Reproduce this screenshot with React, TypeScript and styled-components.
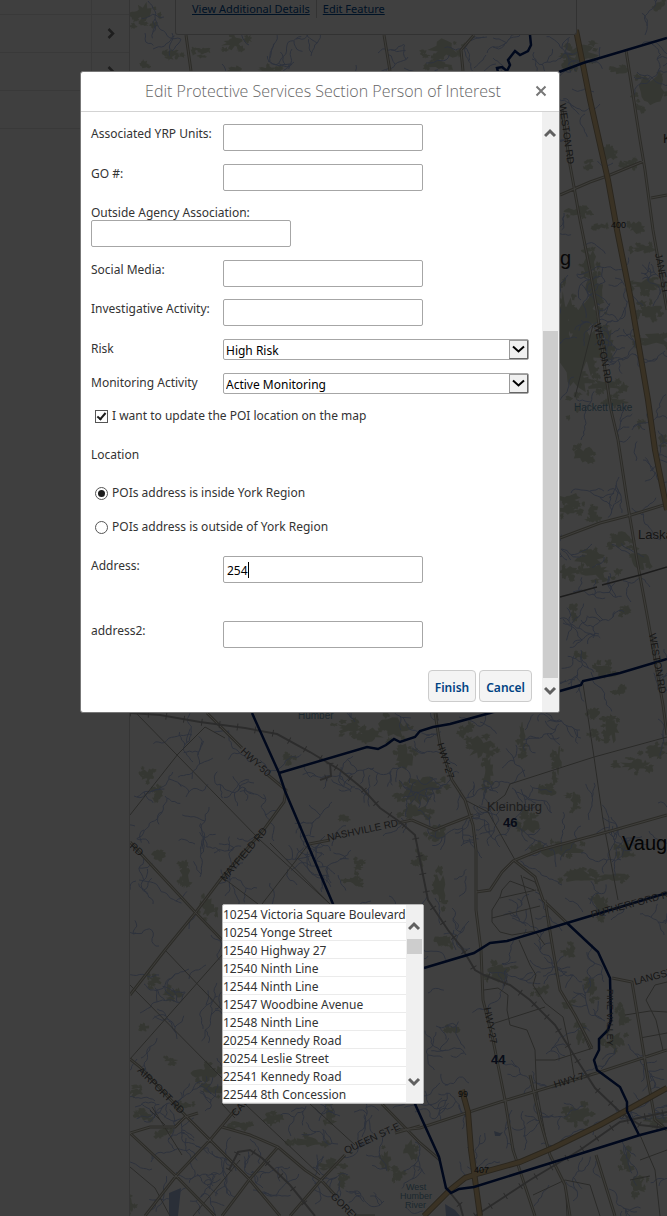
import React from "react";
import styled, { createGlobalStyle } from "styled-components";

const GlobalStyle = createGlobalStyle`
  *, *::before, *::after { box-sizing: border-box; }
  body {
    margin: 0;
    background: #ffffff;
    color: #333333;
    font-family: "Noto Sans", "Open Sans", sans-serif;
    font-size: 12px;
    line-height: 18px;
  }
`;

/* ---------- page behind the dialog ---------- */

const Page = styled.div`
  position: relative;
  display: flex;
  min-height: 100vh;
  overflow: hidden;
`;

const Sidebar = styled.nav`
  flex: 0 0 130px;
  background: #fafafa;
  border-right: 1px solid #d4d4d4;
`;

const SideRow = styled.div<{ $first?: boolean }>`
  display: grid;
  grid-template-columns: 91px 1fr;
  height: ${(p) => (p.$first ? 15 : 38)}px;
  border-bottom: 1px solid #e4e4e4;
`;

const SideToggle = styled.button`
  display: flex;
  align-items: center;
  justify-content: center;
  padding: 0;
  border: 0;
  border-left: 1px solid #e4e4e4;
  background: none;
  color: #777777;
`;

const SideEdge = styled.span`
  grid-column: 2;
  border-left: 1px solid #e4e4e4;
`;

const MapArea = styled.main`
  position: relative;
  flex: 1;
  min-width: 0;
  background: #ffffff;
`;

const MapDrawing = styled.svg`
  position: absolute;
  inset: 0;
  width: 100%;
  height: 100%;
`;

const Popup = styled.section`
  position: relative;
  display: flex;
  align-items: center;
  width: 402px;
  height: 35px;
  margin-left: 45px;
  padding: 0 16px 17px;
  border: 1px solid #c8c8c8;
  border-top: 0;
  border-radius: 0 0 3px 3px;
  background: #ffffff;
`;

const PopupLink = styled.a`
  color: #004b96;
  font-size: 11px;
  text-decoration: underline;
  white-space: nowrap;

  & + & {
    margin-left: 6px;
    padding-left: 6px;
    border-left: 1px solid #cccccc;
  }
`;

const Scrim = styled.div`
  position: absolute;
  inset: 0;
  background: rgba(0, 0, 0, 0.75);
`;

/* ---------- dialog ---------- */

const DialogLayer = styled.div`
  position: absolute;
  inset: 0;
  padding: 71px 107px 0 80px;
`;

const Dialog = styled.div`
  width: 100%;
  max-width: 480px;
  border: 1px solid #777777;
  border-radius: 3px;
  background: #ffffff;
  overflow: hidden;
`;

const DialogHeader = styled.header`
  display: flex;
  align-items: center;
  height: 40px;
  padding: 0 10px 2px 32px;
  border-bottom: 1px solid #d3d3d3;
`;

const DialogTitle = styled.h1`
  flex: 1;
  margin: 0;
  color: #666666;
  font-family: "Open Sans", "Noto Sans", sans-serif;
  font-size: 16px;
  font-weight: 300;
  line-height: 24px;
  text-align: center;
  white-space: nowrap;
`;

const CloseButton = styled.button`
  display: flex;
  padding: 2px;
  border: 0;
  background: none;
  color: #777777;
`;

const DialogBody = styled.div`
  display: flex;
`;

const Form = styled.form`
  flex: 1;
  min-width: 0;
  padding: 12px 10px 10px;
`;

const Field = styled.div<{ $stacked?: boolean; $gap?: number }>`
  display: grid;
  grid-template-columns: ${(p) => (p.$stacked ? "1fr" : "132px 1fr")};
  grid-template-rows: ${(p) => (p.$stacked ? "16px auto" : "auto")};
  align-items: start;
  margin-bottom: ${(p) => p.$gap ?? 13}px;
  line-height: ${(p) => (p.$stacked ? 18 : 20)}px;
`;

const TextInput = styled.input`
  width: 200px;
  height: 27px;
  padding: 2px 3px 0;
  border: 1px solid #a6a6a6;
  border-radius: 2px;
  background: #ffffff;
  color: #000000;
  font: inherit;
  outline: none;
`;

const CaretBox = styled.div`
  position: relative;
`;

const Caret = styled.span`
  position: absolute;
  top: 6px;
  left: 25px;
  width: 1px;
  height: 16px;
  background: #000000;
`;

const SelectBox = styled.div`
  position: relative;
  margin-right: 3px;
`;

const Select = styled.select`
  display: block;
  width: 100%;
  height: 21px;
  padding: 2px 22px 0 2px;
  border: 1px solid #a6a6a6;
  border-radius: 2px;
  background: #ffffff;
  color: #000000;
  font: inherit;
  line-height: 18px;
  appearance: none;
`;

const SelectArrow = styled.span`
  position: absolute;
  top: 1px;
  right: 1px;
  display: flex;
  align-items: center;
  justify-content: center;
  width: 19px;
  height: 19px;
  border: 1px solid #999999;
  border-right-color: #666666;
  border-bottom-color: #666666;
  background: #f0f0f0;
  pointer-events: none;
`;

const Choice = styled.label<{ $gap: number }>`
  display: flex;
  align-items: center;
  gap: 4px;
  margin-bottom: ${(p) => p.$gap}px;
  padding-left: 4px;
`;

const Tick = styled.input`
  position: relative;
  width: 13px;
  height: 13px;
  margin: 0;
  border: 1px solid #555555;
  border-radius: ${(p) => (p.type === "radio" ? "50%" : "0")};
  background: #ffffff;
  appearance: none;

  &[type="radio"]:checked::after {
    content: "";
    position: absolute;
    inset: 2px;
    border-radius: 50%;
    background: #1c1c1c;
  }

  &[type="checkbox"]:checked::after {
    content: "";
    position: absolute;
    top: 0;
    left: 3px;
    width: 5px;
    height: 9px;
    border: solid #1c1c1c;
    border-width: 0 2px 2px 0;
    transform: rotate(40deg);
  }
`;

const Choices = styled.fieldset`
  margin: 0;
  padding: 0;
  border: 0;
`;

const Legend = styled.legend`
  margin-bottom: 20px;
  padding: 0;
`;

const Actions = styled.div`
  display: flex;
  justify-content: flex-end;
  gap: 3px;
  margin-top: 22px;
`;

const ActionButton = styled.button`
  height: 32px;
  padding: 3px 6px 0;
  border: 1px solid #cccccc;
  border-radius: 4px;
  background: #f4f4f4;
  color: #004282;
  font: inherit;
  font-weight: 600;
`;

/* ---------- scroll bars ---------- */

const Bar = styled.div`
  display: flex;
  flex: 0 0 17px;
  flex-direction: column;
  align-items: center;
  background: #f0f0f0;
  color: #606060;
`;

const BarEnd = styled.div<{ $down?: boolean }>`
  display: flex;
  flex: 0 0 34px;
  align-items: ${(p) => (p.$down ? "flex-start" : "flex-end")};
  padding: 8px 0;
`;

const BarSpace = styled.div<{ $grow: number }>`
  flex: ${(p) => p.$grow} 0 0;
`;

const BarThumb = styled.div<{ $grow: number }>`
  flex: ${(p) => p.$grow} 0 0;
  width: 15px;
  background: #cdcdcd;
`;

/* ---------- address suggestions ---------- */

const Suggestions = styled.div`
  position: absolute;
  top: 904px;
  left: 222px;
  display: flex;
  width: 202px;
  border: 1px solid #b5b5b5;
  border-radius: 2px;
  background: #ffffff;
  overflow: hidden;
`;

const SuggestionList = styled.ul`
  flex: 1;
  min-width: 0;
  margin: 0;
  padding: 0;
  list-style: none;
`;

const Suggestion = styled.li`
  height: 18px;
  border-bottom: 1px solid #ebebeb;
  line-height: 20px;
  white-space: nowrap;
`;

const Chevron = ({ down }: { down?: boolean }) => (
  <svg width="13" height="10" viewBox="0 0 13 10" fill="none" stroke="currentColor" strokeWidth="3" aria-hidden="true">
    <path d={down ? "M1 2l5 5 5-5" : "M1 8l5-5 5 5"} />
  </svg>
);

const ScrollBar = ({ before, thumb, after }: { before: number; thumb: number; after: number }) => (
  <Bar aria-hidden="true">
    <BarEnd><Chevron /></BarEnd>
    <BarSpace $grow={before} />
    <BarThumb $grow={thumb} />
    <BarSpace $grow={after} />
    <BarEnd $down><Chevron down /></BarEnd>
  </Bar>
);

/* ---------- map data ---------- */

type Spot = [number, number, number, number];

function random(seed: number) {
  let s = seed;
  return () => {
    s = (s * 16807) % 2147483647;
    return s / 2147483647;
  };
}

/* A creek that wanders from its source, in short steps, with a side arm now and then. */
function creek(x: number, y: number, angle: number, steps: number, rnd: () => number): string {
  let d = `M${x} ${y}`;
  let arms = "";
  let a = angle;
  let px = x;
  let py = y;
  for (let i = 0; i < steps; i++) {
    a += (rnd() - 0.5) * 1.9;
    a = angle + (a - angle) * 0.8;
    px += Math.cos(a) * 3;
    py += Math.sin(a) * 3;
    d += `L${px.toFixed(1)} ${py.toFixed(1)}`;
    if (steps > 9 && rnd() > 0.85) {
      arms += creek(Math.round(px), Math.round(py), angle + (rnd() > 0.5 ? 1 : -1), 5, rnd);
    }
  }
  return d + arms;
}

function patch(x: number, y: number, rx: number, ry: number, rnd: () => number) {
  const n = 18;
  const pts: string[] = [];
  for (let i = 0; i < n; i++) {
    const t = (i / n) * Math.PI * 2;
    const r = 0.4 + rnd() * 0.7;
    pts.push(`${(x + Math.cos(t) * rx * r).toFixed(1)} ${(y + Math.sin(t) * ry * r).toFixed(1)}`);
  }
  return `M${pts.join("L")}Z`;
}

/* Woodland: one ragged core with smaller pieces broken off round it. */
function wood([x, y, rx, ry]: Spot, rnd: () => number) {
  let d = patch(x, y, rx * 0.85, ry * 0.85, rnd);
  const pieces = Math.round((rx + ry) / 4);
  for (let i = 0; i < pieces; i++) {
    const t = rnd() * Math.PI * 2;
    const far = 0.6 + rnd() * 0.5;
    d += patch(x + Math.cos(t) * rx * far, y + Math.sin(t) * ry * far, 2 + rnd() * 4, 2 + rnd() * 3, rnd);
  }
  return d;
}

const woodSpots: Spot[] = [
  [144, 13, 18, 14], [173, 53, 9, 5], [202, 51, 8, 5], [234, 43, 15, 8], [147, 66, 5, 3], [232, 69, 6, 3], [268, 70, 14, 4],
  [445, 50, 22, 13], [440, 65, 14, 8], [580, 52, 22, 10], [570, 62, 12, 8], [660, 5, 6, 6], [618, 70, 12, 5], [652, 92, 18, 24],
  [607, 152, 6, 10], [590, 166, 5, 5], [630, 163, 10, 4], [575, 212, 14, 5], [602, 226, 7, 3], [635, 227, 9, 8], [645, 248, 16, 5],
  [590, 262, 8, 20], [595, 290, 12, 22], [580, 320, 24, 28], [572, 360, 20, 56], [588, 350, 18, 30], [564, 320, 10, 40], [645, 285, 20, 8], [650, 310, 20, 9],
  [655, 340, 24, 8], [608, 345, 8, 20], [605, 385, 24, 7], [617, 402, 14, 6], [640, 422, 5, 4], [662, 440, 5, 7], [584, 455, 12, 11],
  [568, 500, 18, 9], [566, 510, 15, 7], [592, 514, 6, 8], [620, 540, 12, 10], [590, 558, 18, 10], [597, 571, 20, 10], [568, 572, 13, 7],
  [640, 560, 10, 12], [573, 615, 4, 7], [623, 612, 6, 5], [583, 655, 8, 5], [603, 670, 14, 9], [619, 692, 6, 6], [590, 712, 7, 6],
  [350, 728, 20, 7], [370, 735, 18, 9], [395, 728, 20, 14], [404, 757, 12, 15], [413, 795, 17, 14], [288, 758, 7, 6],
  [148, 775, 9, 8], [158, 794, 6, 7], [347, 819, 5, 4], [358, 863, 5, 5], [354, 880, 10, 7], [160, 857, 8, 6],
  [185, 875, 7, 16], [208, 908, 9, 14], [466, 730, 8, 6], [480, 748, 16, 14], [488, 770, 7, 20], [522, 736, 4, 20],
  [546, 790, 8, 7], [575, 800, 6, 12], [612, 728, 9, 17], [635, 765, 18, 8], [655, 750, 15, 8], [425, 785, 22, 12],
  [417, 812, 20, 8], [437, 835, 12, 8], [420, 860, 5, 10], [440, 890, 7, 20], [530, 825, 12, 14], [560, 850, 28, 10], [580, 877, 20, 9],
  [610, 877, 20, 6], [625, 850, 8, 12], [600, 905, 10, 14], [570, 952, 9, 8], [592, 990, 7, 12], [540, 990, 11, 6], [570, 1005, 5, 6],
  [500, 972, 15, 10], [580, 1035, 5, 12], [615, 1040, 12, 10], [622, 1015, 6, 14], [578, 1115, 17, 12], [446, 940, 8, 8], [450, 1030, 5, 5],
  [660, 1120, 14, 5], [625, 1160, 7, 14], [638, 1185, 10, 12], [155, 980, 8, 8], [170, 993, 11, 6], [142, 1029, 5, 3],
  [171, 1060, 8, 4], [205, 1073, 16, 9], [215, 1090, 13, 8], [184, 1105, 12, 4], [138, 1092, 8, 6], [145, 1116, 13, 5], [164, 1132, 7, 4],
  [240, 1125, 13, 5], [270, 1118, 9, 7], [310, 1142, 21, 7], [330, 1115, 6, 12], [385, 1160, 7, 12], [398, 1175, 7, 7], [342, 1180, 6, 6],
  [330, 1166, 14, 5], [130, 1205, 5, 9], [410, 1150, 9, 12], [595, 735, 6, 4], [558, 762, 5, 20],
];

const creekBoxes: [Spot, number][] = [
  [[130, 0, 45, 70], 5], [[176, 36, 400, 35], 20], [[562, 0, 105, 200], 14], [[562, 200, 105, 500], 50],
  [[132, 715, 280, 190], 52], [[132, 905, 90, 300], 32], [[222, 1104, 200, 110], 22], [[424, 715, 243, 230], 54], [[424, 945, 243, 270], 44],
];

const rnd = random(7291);
const woods = woodSpots.map((s) => wood(s, rnd)).join("");
const creeks = creekBoxes
  .flatMap(([[x, y, w, h], n]) =>
    Array.from({ length: n }, () =>
      creek(Math.round(x + rnd() * w), Math.round(y + rnd() * h), rnd() * 6.28, 6 + Math.floor(rnd() * 14), rnd),
    ),
  )
  .join("");

/* Roads that are drawn as a pair of thin lines. */
const mainRoads = [
  "M186 35L191 71", "M384 35L390 71", "M474 35L461 50L463 71",
  "M562 110L570 165L580 220L590 270L597 310L605 370L611 410L618 440L627 500L637 560L648 620L655 660L663 705L667 735",
  "M626 50L640 140L645 170L653 230L667 310", "M560 195L590 182L610 175L644 161", "M651 198L667 195", "M560 538L600 523L631 515L667 504",
  "M435 713L440 745L452 780L465 800L473 825L476 850L476 910L481 950L483 1000L493 1040L505 1100L513 1150L535 1216",
  "M207 713L242 748M268 775L286 790L284 802L265 828L220 880L196 912L165 950",
  "M130 842L195 912L222 940", "M130 995L165 950", "M309 844L330 840M398 823L412 820L435 830L447 825L473 815",
  "M476 892L490 890L502 872L513 861L540 850L607 832L667 815", "M515 861L535 877L543 900L567 923",
  "M400 1130L420 1128L500 1102L600 1072L667 1050", "M545 900L553 950L560 990L575 1015L592 1048",
  "M130 1059L140 1067L185 1115L210 1140L250 1180L280 1216", "M222 1127L250 1135L278 1147L305 1170L320 1180",
  "M130 1133L150 1127L175 1127L185 1117L198 1113", "M130 1133L176 1176L215 1216", "M145 1216L176 1176L210 1140L235 1110",
  "M222 1216L249 1180L278 1147", "M290 1216L321 1180L345 1155M395 1133L420 1126", "M321 1180L335 1195M355 1216L375 1216",
  "M382 1104L420 1143L440 1160", "M612 978L632 982L640 1030L648 1080L655 1120L667 1130",
  "M530 1075L540 1120L550 1155L565 1185L570 1216", "M596 1155L610 1200L615 1216",
];

/* Side streets, one line each. */
const sideRoads = [
  "M136 713L260 840L330 904", "M130 815L178 754L205 727L225 738", "M222 877L258 904", "M308 845L262 904", "M330 904L270 843",
  "M165 950L222 1010", "M130 985L222 1078", "M222 955L130 1059", "M245 1104L320 1175", "M310 1104L355 1145",
  "M152 1107L182 1155M165 1125L150 1110", "M130 1167L155 1188L170 1216", "M222 1104L235 1118", "M193 1216L240 1160",
  "M437 713L438 720", "M465 800L488 812", "M583 684L594 757L603 820L618 900", "M510 784L594 757L667 737", "M510 784L505 795L492 805",
  "M488 812L515 860", "M521 875L530 908L534 930L545 945", "M534 890L510 881L502 890L500 897M537 890L539 890L535 882L523 877",
  "M492 918L540 906M500 897L492 910L492 922L500 932L512 935L535 931", "M500 898L536 890M548 925L555 960L560 990L575 1015L590 1050",
  "M519 940L530 965L536 975L533 985L545 1003L563 1017L570 1050L574 1075", "M484 990L498 988L508 995L507 1010L510 1025L527 1030L535 1050L537 1100",
  "M492 1024L545 1007", "M536 1060L555 1060L593 1048", "M537 1090L548 1150", "M646 1000L655 985L667 982M646 1000L656 1020L663 1050M640 1038L667 1033",
  "M625 1015L650 1011L667 1012", "M533 1195L565 1180L590 1185L600 1216", "M567 1216L566 1195", "M640 1135L655 1170L660 1216",
  "M640 1160L667 1150M630 1180L650 1176", "M575 397L593 325",
];

const railways = [
  "M130 713L160 715L200 722L245 728L277 734L310 752L340 770L362 788L380 808L400 822L415 835L421 865L428 900L448 930L462 948L475 970L484 975L510 985L530 1000L555 1025L577 1060L595 1088L620 1112L640 1125L667 1128",
  "M330 763L331 776L320 780", "M475 1216L530 1180L580 1150L620 1122L667 1112",
  "M229 1170L238 1152L250 1150L262 1158L290 1185L315 1216", "M448 1190L460 1205L463 1216",
];

const boundaries = [
  "M252 713L279 773L285 791L333 904L415 1104L439 1157L446 1188L451 1193L459 1189L474 1187L640 1135L667 1128",
  "M279 773L367 747L378 749L386 745L394 739L400 742L415 737L420 731L433 727L450 724L490 713L560 691L581 685L583 681L620 673L667 659",
  "M424 968L474 953L490 943L507 941L567 923L667 893",
  "M567 923L598 952L610 978L611 1020L608 1030L599 1039L599 1050L594 1060L597 1070L620 1087L627 1102L627 1111L639 1135",
  "M559 72L583 63L667 38",
  "M530 35L531 45L528 51L520 55L515 51L508 60L510 65L507 71L502 67L497 68L498 72",
];

const highways = [
  "M576 30L590 100L608 180L617 230L631 300L648 400L655 450L667 510",
  "M424 1216L450 1190L465 1178L480 1173L520 1162L555 1147L600 1125L667 1088",
  "M462 1090L468 1112L471 1150L480 1216",
];

type Label = { x: number; y: number; text: string; size: number; turn?: number; fill?: string; bold?: boolean };

const road = "#606060";
const water = "#70a0b8";

const labels: Label[] = [
  { x: 559, y: 104, text: "WESTON RD", size: 10, turn: 82, fill: road },
  { x: 594, y: 324, text: "WESTON RD", size: 10, turn: 79, fill: road },
  { x: 649, y: 634, text: "WESTON RD", size: 10, turn: 80, fill: road },
  { x: 655, y: 254, text: "JANE ST", size: 10, turn: 79, fill: road },
  { x: 611, y: 228, text: "400", size: 9, fill: "#333333" },
  { x: 560, y: 265, text: "g", size: 20, fill: "#222222" },
  { x: 663, y: 143, text: "K", size: 13, fill: "#444444" },
  { x: 574, y: 411, text: "Hackett Lake", size: 10, fill: water },
  { x: 638, y: 539, text: "Laskay", size: 13, fill: "#555555" },
  { x: 298, y: 719, text: "Humber", size: 10, fill: water },
  { x: 240, y: 752, text: "HWY-50", size: 10, turn: 43, fill: road },
  { x: 437, y: 744, text: "HWY-27", size: 10, turn: 73, fill: road },
  { x: 225, y: 882, text: "MAYFIELD RD", size: 10, turn: -50, fill: road },
  { x: 328, y: 841, text: "NASHVILLE RD", size: 10, turn: -12, fill: road },
  { x: 129, y: 847, text: "RD", size: 10, turn: 42, fill: road },
  { x: 487, y: 811, text: "Kleinburg", size: 13, fill: "#777777" },
  { x: 503, y: 827, text: "46", size: 13, fill: "#203060", bold: true },
  { x: 622, y: 850, text: "Vaughan", size: 20, fill: "#111111" },
  { x: 592, y: 918, text: "RUTHERFORD RD", size: 10, turn: -15, fill: road },
  { x: 635, y: 985, text: "LANGSTAFF RD", size: 10, turn: -15, fill: road },
  { x: 607, y: 989, text: "PINE VALLEY", size: 9, turn: 90, fill: road },
  { x: 484, y: 1008, text: "HWY-27", size: 10, turn: 80, fill: road },
  { x: 491, y: 1064, text: "44", size: 13, fill: "#203060", bold: true },
  { x: 555, y: 1088, text: "HWY-7", size: 10, turn: -17, fill: road },
  { x: 458, y: 1097, text: "99", size: 9, fill: "#333333" },
  { x: 474, y: 1173, text: "407", size: 9, fill: "#333333" },
  { x: 137, y: 1071, text: "AIRPORT RD", size: 10, turn: 45, fill: road },
  { x: 236, y: 1117, text: "CASTLEMORE", size: 10, turn: -50, fill: road },
  { x: 346, y: 1154, text: "QUEEN ST-E", size: 10, turn: -25, fill: road },
  { x: 330, y: 1197, text: "GOREWAY", size: 10, turn: 45, fill: road },
  { x: 406, y: 1190, text: "West", size: 9, fill: water },
  { x: 400, y: 1199, text: "Humber", size: 9, fill: water },
  { x: 405, y: 1208, text: "River", size: 9, fill: water },
];

const RoadMap = () => (
  <MapDrawing viewBox="130 0 537 1216" preserveAspectRatio="xMinYMin slice" fill="none" role="img" aria-label="Road map of Vaughan and its surroundings">
    <path d={woods} fill="#d4dcc6" />
    <path d={creeks} stroke="#b4c6f0" strokeWidth="1" />
    <path d="M169 1193L181 1188L178 1216L169 1216ZM494 1131L500 1133L503 1132L500 1136L495 1136ZM445 1204L455 1210L460 1216L446 1216Z" fill="#a8bce0" />
    <path d={sideRoads.join("")} stroke="#a8a8a0" strokeWidth="1" />
    <path d={mainRoads.join("")} stroke="#b2b0a0" strokeWidth="3" />
    <path d={mainRoads.join("")} stroke="#f6f4ea" strokeWidth="1" />
    <path d={railways.join("")} stroke="#b0b0b0" strokeWidth="2" />
    <path d={railways.join("")} stroke="#a8a8a8" strokeWidth="7" strokeDasharray="1 17" />
    <path d="M560 597L597 587M602 585L640 575L667 567" stroke="#707070" strokeWidth="1.500" />
    <path d={highways.join("")} stroke="#a89878" strokeWidth="6" />
    <path d={highways.join("")} stroke="#e8c890" strokeWidth="4" />
    <path d={boundaries.join("")} stroke="#002070" strokeWidth="2.500" />
    <g fontFamily="'Liberation Sans', Arial, sans-serif">
      {labels.map((l) => (
        <text
          key={`${l.text}-${l.x}`}
          x={l.x}
          y={l.y}
          fill={l.fill}
          fontSize={l.size}
          fontWeight={l.bold ? 700 : 400}
          transform={l.turn ? `rotate(${l.turn} ${l.x} ${l.y})` : undefined}
        >
          {l.text}
        </text>
      ))}
    </g>
  </MapDrawing>
);

const SideChevron = () => (
  <svg width="8" height="11" viewBox="0 0 8 11" fill="none" stroke="currentColor" strokeWidth="2.500" aria-hidden="true">
    <path d="M1.500 1l4.500 4.500L1.500 10" />
  </svg>
);

const TextField = ({ id, label, stacked, gap }: { id: string; label: string; stacked?: boolean; gap?: number }) => (
  <Field $stacked={stacked} $gap={gap}>
    <label htmlFor={id}>{label}</label>
    <TextInput id={id} type="text" />
  </Field>
);

const SelectField = ({ id, label, value, gap }: { id: string; label: string; value: string; gap?: number }) => (
  <Field $gap={gap}>
    <label htmlFor={id}>{label}</label>
    <SelectBox>
      <Select id={id} defaultValue={value}>
        <option>{value}</option>
      </Select>
      <SelectArrow>
        <svg width="13" height="9" viewBox="0 0 13 9" fill="none" stroke="#000000" strokeWidth="2" aria-hidden="true">
          <path d="M1 1.500l5.500 5L12 1.500" />
        </svg>
      </SelectArrow>
    </SelectBox>
  </Field>
);

const suggestions = [
  "10254 Victoria Square Boulevard",
  "10254 Yonge Street",
  "12540 Highway 27",
  "12540 Ninth Line",
  "12544 Ninth Line",
  "12547 Woodbine Avenue",
  "12548 Ninth Line",
  "20254 Kennedy Road",
  "20254 Leslie Street",
  "22541 Kennedy Road",
  "22544 8th Concession",
];

export default function App() {
  return (
    <>
      <GlobalStyle />
      <Page>
        <Sidebar aria-label="Layers">
          <SideRow $first><SideEdge /></SideRow>
          <SideRow><SideEdge as={SideToggle} aria-label="Open layer"><SideChevron /></SideEdge></SideRow>
          <SideRow><SideEdge as={SideToggle} aria-label="Open layer"><SideChevron /></SideEdge></SideRow>
          <SideRow><SideEdge /></SideRow>
        </Sidebar>
        <MapArea>
          <RoadMap />
          <Popup>
            <PopupLink href="#details">View Additional Details</PopupLink>
            <PopupLink href="#edit">Edit Feature</PopupLink>
          </Popup>
        </MapArea>
        <Scrim />
        <DialogLayer>
          <Dialog role="dialog" aria-labelledby="dialog-title">
            <DialogHeader>
              <DialogTitle id="dialog-title">Edit Protective Services Section Person of Interest</DialogTitle>
              <CloseButton type="button" aria-label="Close">
                <svg width="12" height="12" viewBox="0 0 12 12" stroke="currentColor" strokeWidth="2" aria-hidden="true">
                  <path d="M1.500 1.500l9 9M10.500 1.500l-9 9" />
                </svg>
              </CloseButton>
            </DialogHeader>
            <DialogBody>
              <Form onSubmit={(e) => e.preventDefault()}>
                <TextField id="units" label="Associated YRP Units:" />
                <TextField id="go" label="GO #:" />
                <TextField id="agency" label="Outside Agency Association:" stacked />
                <TextField id="social" label="Social Media:" gap={12} />
                <TextField id="investigative" label="Investigative Activity:" />
                <SelectField id="risk" label="Risk" value="High Risk" />
                <SelectField id="monitoring" label="Monitoring Activity" value="Active Monitoring" />
                <Choice $gap={21}>
                  <Tick type="checkbox" defaultChecked />
                  I want to update the POI location on the map
                </Choice>
                <Choices>
                  <Legend>Location</Legend>
                  <Choice $gap={16}>
                    <Tick type="radio" name="region" defaultChecked />
                    POIs address is inside York Region
                  </Choice>
                  <Choice $gap={20}>
                    <Tick type="radio" name="region" />
                    POIs address is outside of York Region
                  </Choice>
                </Choices>
                <Field $gap={38}>
                  <label htmlFor="address">Address:</label>
                  <CaretBox>
                    <TextInput id="address" type="text" defaultValue="254" />
                    <Caret />
                  </CaretBox>
                </Field>
                <TextField id="address2" label="address2:" gap={22} />
                <Actions>
                  <ActionButton type="submit">Finish</ActionButton>
                  <ActionButton type="button">Cancel</ActionButton>
                </Actions>
              </Form>
              <ScrollBar before={185} thumb={347} after={0} />
            </DialogBody>
          </Dialog>
        </DialogLayer>
        <Suggestions>
          <SuggestionList aria-label="Matching addresses">
            {suggestions.map((s) => (
              <Suggestion key={s}>{s}</Suggestion>
            ))}
          </SuggestionList>
          <ScrollBar before={0} thumb={15} after={115} />
        </Suggestions>
      </Page>
    </>
  );
}
